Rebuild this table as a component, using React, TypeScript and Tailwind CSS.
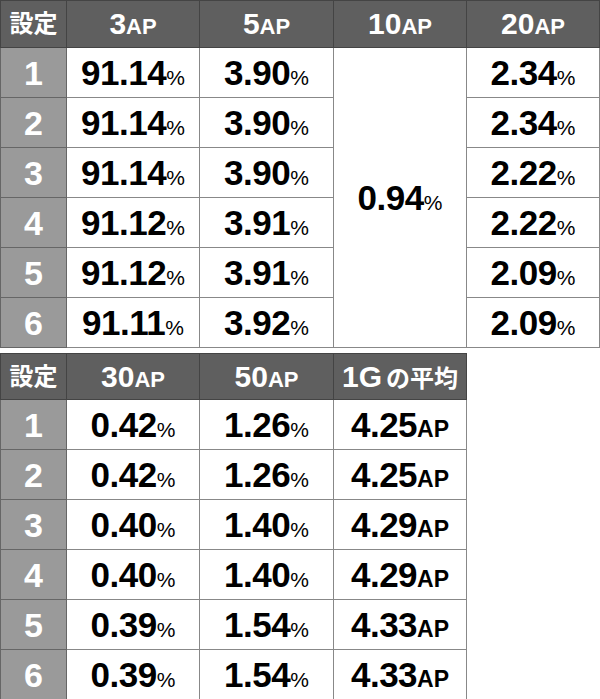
import { FC, ReactNode } from "react";

const font = { fontFamily: '"Liberation Sans", "Noto Sans CJK JP", Arial, sans-serif' };

const Pct: FC<{ v: string; unit?: string }> = ({ v, unit = "%" }) => (
  <span className="font-bold text-black leading-none">
    <span className="text-[35px] tracking-[-0.5px]">{v}</span>
    <span className={unit === "%" ? "text-[21px] font-normal" : "text-[23px]"}>{unit}</span>
  </span>
);

const Head: FC<{ n: string; u?: string }> = ({ n, u = "AP" }) => (
  <span className="font-bold text-white leading-none">
    <span className="text-[30px]">{n}</span>
    <span className="text-[22px]">{u}</span>
  </span>
);

const th = "p-0 leading-none bg-[#5f5f5f] border border-[#444] text-center align-middle";
const td = "p-0 leading-none border border-[#888] text-center align-middle bg-white";
const sc = "p-0 leading-none bg-[#9a9a9a] border border-[#666] text-center align-middle text-white font-bold text-[34px]";

const SetHead: ReactNode = <span className="text-white font-bold text-[24px]">設定</span>;

const App: FC = () => {
  const top = [
    ["91.14", "3.90", "2.34"],
    ["91.14", "3.90", "2.34"],
    ["91.14", "3.90", "2.22"],
    ["91.12", "3.91", "2.22"],
    ["91.12", "3.91", "2.09"],
    ["91.11", "3.92", "2.09"],
  ];
  const bottom = [
    ["0.42", "1.26", "4.25"],
    ["0.42", "1.26", "4.25"],
    ["0.40", "1.40", "4.29"],
    ["0.40", "1.40", "4.29"],
    ["0.39", "1.54", "4.33"],
    ["0.39", "1.54", "4.33"],
  ];

  return (
    <div className="w-[600px] h-[699px] bg-white overflow-hidden" style={font}>
      <table className="border-collapse table-fixed w-[599px]">
        <colgroup>
          <col className="w-[66px]" />
          <col className="w-[133px]" />
          <col className="w-[134px]" />
          <col className="w-[133px]" />
          <col className="w-[133px]" />
        </colgroup>
        <thead>
          <tr className="h-[47px]">
            <th className={th}>{SetHead}</th>
            <th className={th}><Head n="3" /></th>
            <th className={th}><Head n="5" /></th>
            <th className={th}><Head n="10" /></th>
            <th className={th}><Head n="20" /></th>
          </tr>
        </thead>
        <tbody>
          {top.map(([a, b, d], i) => (
            <tr key={i} className="h-[50px]">
              <td className={sc}>{i + 1}</td>
              <td className={td}><Pct v={a} /></td>
              <td className={td}><Pct v={b} /></td>
              {i === 0 && (
                <td rowSpan={6} className={td}><Pct v="0.94" /></td>
              )}
              <td className={td}><Pct v={d} /></td>
            </tr>
          ))}
        </tbody>
      </table>

      <table className="border-collapse table-fixed w-[466px] mt-[5px]">
        <colgroup>
          <col className="w-[66px]" />
          <col className="w-[133px]" />
          <col className="w-[134px]" />
          <col className="w-[133px]" />
        </colgroup>
        <thead>
          <tr className="h-[46px]">
            <th className={th}>{SetHead}</th>
            <th className={th}><Head n="30" /></th>
            <th className={th}><Head n="50" /></th>
            <th className={th}>
              <span className="font-bold text-white leading-none">
                <span className="text-[30px]">1G</span>
                <span className="text-[24px] ml-[4px]">の平均</span>
              </span>
            </th>
          </tr>
        </thead>
        <tbody>
          {bottom.map(([a, b, c], i) => (
            <tr key={i} className="h-[50px]">
              <td className={sc}>{i + 1}</td>
              <td className={td}><Pct v={a} /></td>
              <td className={td}><Pct v={b} /></td>
              <td className={td}><Pct v={c} unit="AP" /></td>
            </tr>
          ))}
        </tbody>
      </table>
    </div>
  );
};

export default App;
